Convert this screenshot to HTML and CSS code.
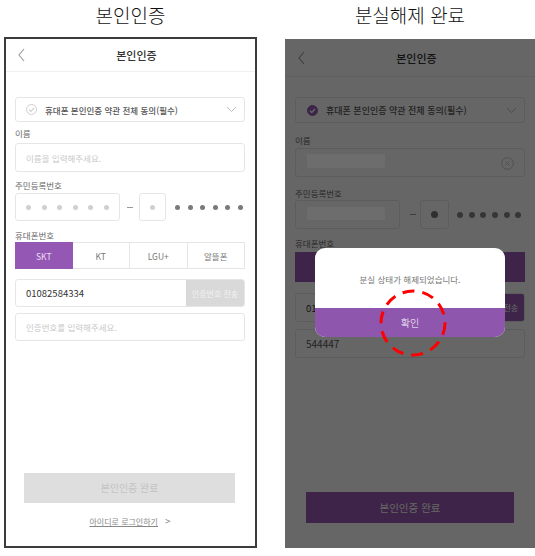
FILE: index.html
```html
<!DOCTYPE html>
<html lang="ko">
<head>
    <meta charset="UTF-8">
    <meta name="viewport" content="width=device-width, initial-scale=1.0">
    <title>본인인증 / 분실해제 완료</title>
    <link rel="stylesheet" href="styles.css">
</head>
<body>
    <div class="sheet">
        <div class="shot left">
            <div class="caption">본인인증</div>
            <div class="phone framed">
                <div class="topbar">
                    <svg class="back" width="7" height="14" viewBox="0 0 7 14"><path d="M6 1 L1 7 L6 13"/></svg>
                    <span class="topbar-title">본인인증</span>
                    <span></span>
                </div>
                <div class="form">
                    <div class="agree">
                        <svg class="check" width="11" height="11" viewBox="0 0 11 11"><circle cx="5.5" cy="5.5" r="5"/><path d="M3 5.7 L4.8 7.4 L8 4"/></svg>
                        <span class="agree-text">휴대폰 본인인증 약관 전체 동의(필수)</span>
                        <svg class="chev" width="11" height="7" viewBox="0 0 11 7"><path d="M1 1 L5.5 5.5 L10 1"/></svg>
                    </div>
                    <div class="label label-name">이름</div>
                    <div class="field"><span class="ph">이름을 입력해주세요.</span></div>
                    <div class="label label-ssn">주민등록번호</div>
                    <div class="ssn">
                        <div class="field ssn-front">
                            <i class="dot"></i><i class="dot"></i><i class="dot"></i><i class="dot"></i><i class="dot"></i><i class="dot"></i>
                        </div>
                        <span class="dash"></span>
                        <div class="field ssn-back"><i class="dot"></i></div>
                        <div class="dots"><i></i><i></i><i></i><i></i><i></i><i></i></div>
                    </div>
                    <div class="label label-phone">휴대폰번호</div>
                    <div class="tabs">
                        <div class="tab on">SKT</div>
                        <div class="tab">KT</div>
                        <div class="tab">LGU+</div>
                        <div class="tab">알뜰폰</div>
                    </div>
                    <div class="field phone-no">
                        <span class="val">01082584334</span>
                        <span class="send">인증번호 전송</span>
                    </div>
                    <div class="field code"><span class="ph">인증번호를 입력해주세요.</span></div>
                    <div class="footer">
                        <div class="done">본인인증 완료</div>
                        <div class="login-link"><span class="u">아이디로 로그인하기</span><span class="gt">&gt;</span></div>
                    </div>
                </div>
            </div>
        </div>

        <div class="shot right">
            <div class="caption">분실해제 완료</div>
            <div class="phone dimmed">
                <div class="topbar">
                    <svg class="back" width="7" height="14" viewBox="0 0 7 14"><path d="M6 1 L1 7 L6 13"/></svg>
                    <span class="topbar-title">본인인증</span>
                    <span></span>
                </div>
                <div class="form">
                    <div class="agree">
                        <svg class="check on" width="11" height="11" viewBox="0 0 11 11"><circle cx="5.5" cy="5.5" r="5"/><path d="M3 5.7 L4.8 7.4 L8 4"/></svg>
                        <span class="agree-text">휴대폰 본인인증 약관 전체 동의(필수)</span>
                        <svg class="chev" width="11" height="7" viewBox="0 0 11 7"><path d="M1 1 L5.5 5.5 L10 1"/></svg>
                    </div>
                    <div class="label label-name">이름</div>
                    <div class="field name">
                        <span class="mask"></span>
                        <svg class="clear" width="13" height="13" viewBox="0 0 13 13"><circle cx="6.5" cy="6.5" r="5.8"/><path d="M4.5 4.5 L8.5 8.5 M8.5 4.5 L4.5 8.5"/></svg>
                    </div>
                    <div class="label label-ssn">주민등록번호</div>
                    <div class="ssn">
                        <div class="field ssn-front"><span class="mask"></span></div>
                        <span class="dash"></span>
                        <div class="field ssn-back"><i class="dot filled"></i></div>
                        <div class="dots"><i></i><i></i><i></i><i></i><i></i><i></i></div>
                    </div>
                    <div class="label label-phone">휴대폰번호</div>
                    <div class="carrier-bar"></div>
                    <div class="field phone-no">
                        <span class="val">01082584334</span>
                        <span class="send">인증번호 전송</span>
                    </div>
                    <div class="field code"><span class="val">544447</span></div>
                    <div class="footer">
                        <div class="done">본인인증 완료</div>
                    </div>
                </div>

                <div class="dim-layer"></div>

                <div class="dialog">
                    <div class="dialog-msg">분실 상태가 해제되었습니다.</div>
                    <div class="dialog-ok">확인</div>
                </div>
                <svg class="mark" width="68" height="68" viewBox="0 0 68 68"><circle cx="34" cy="34" r="32"/></svg>
            </div>
        </div>
    </div>
</body>
</html>
```

FILE: styles.css
```css
html, body {
    margin: 0;
    padding: 0;
    background: #fff;
    font-family: "Noto Sans CJK KR", "Noto Sans", sans-serif;
}
.sheet {
    display: flex;
    width: 535px;
    height: 556px;
    overflow: hidden;
}
.shot {
    display: flex;
    flex-direction: column;
}
.shot.left {
    width: 253px;
    margin-left: 4px;
}
.shot.right {
    width: 250px;
    margin-left: 28px;
}
.caption {
    height: 37px;
    line-height: 30px;
    font-size: 19px;
    font-weight: 300;
    color: #111;
    text-align: center;
}
.right .caption {
    height: 39px;
}

/* phone screen */
.phone {
    position: relative;
    isolation: isolate;
    display: flex;
    flex-direction: column;
    background: #fff;
    box-sizing: border-box;
    overflow: hidden;
}
.phone.framed {
    height: 511px;
    border: 2px solid #3c3c3c;
}
.phone.dimmed {
    height: 509px;
}
.topbar {
    display: grid;
    grid-template-columns: 1fr auto 1fr;
    align-items: center;
    height: 32px;
    padding-left: 12px;
    border-bottom: 1px solid #f0f0f0;
}
.dimmed .topbar {
    height: 37px;
    padding-left: 13px;
}
.back path {
    fill: none;
    stroke: #9a9a9a;
    stroke-width: 1.1;
}
.topbar-title {
    font-size: 11px;
    font-weight: 500;
    color: #333;
}

.form {
    flex: 1;
    display: flex;
    flex-direction: column;
    padding: 25px 10px 0 9px;
}
.dimmed .form {
    padding: 20px 10px 0 10px;
}
.agree {
    display: flex;
    align-items: center;
    height: 25px;
    box-sizing: border-box;
    padding: 0 7px 0 10px;
    border: 1px solid #e6e6e6;
    border-radius: 3px;
}
.dimmed .agree {
    height: 26px;
    padding-left: 11px;
}
.check circle {
    fill: none;
    stroke: #cfcfcf;
}
.check path {
    fill: none;
    stroke: #cfcfcf;
    stroke-width: 1.1;
}
.check.on circle {
    fill: #995ab4;
    stroke: #995ab4;
}
.check.on path {
    stroke: #fff;
    stroke-width: 1.4;
}
.agree-text {
    flex: 1;
    margin-left: 8px;
    font-size: 8.5px;
    font-weight: 500;
    color: #555;
}
.dimmed .agree-text {
    font-size: 9px;
}
.chev path {
    fill: none;
    stroke: #bdbdbd;
}
.label {
    height: 14px;
    line-height: 14px;
    font-size: 8.5px;
    color: #666;
}
.label-name {
    margin-top: 4px;
}
.label-ssn {
    margin-top: 6px;
}
.label-phone {
    margin-top: 7px;
}
.field {
    position: relative;
    display: flex;
    align-items: center;
    height: 29px;
    margin-top: 3px;
    padding-left: 10px;
    box-sizing: border-box;
    border: 1px solid #e6e6e6;
    border-radius: 3px;
    overflow: hidden;
}
.ph {
    font-size: 8.5px;
    color: #c9c9c9;
}
.val {
    font-size: 9.5px;
    color: #333;
}

/* resident number */
.ssn {
    display: flex;
    align-items: center;
    height: 28px;
    margin-top: 1px;
}
.ssn .field {
    height: 100%;
    margin-top: 0;
}
.ssn-front {
    width: 105px;
    gap: 10.5px;
}
.dot {
    width: 5px;
    height: 5px;
    border-radius: 50%;
    background: #d0d0d0;
}
.dot.filled {
    width: 7px;
    height: 7px;
    background: #777;
}
.dash {
    width: 6px;
    height: 1px;
    margin: 0 6px 0 7px;
    background: #999;
}
.ssn-back {
    width: 27px;
    padding-left: 0;
    justify-content: center;
}
.dots {
    display: flex;
    gap: 7.5px;
    margin-left: 9px;
}
.dots i {
    width: 5px;
    height: 5px;
    border-radius: 50%;
    background: #7a7a7a;
}

/* carrier */
.tabs {
    display: grid;
    grid-template-columns: repeat(4, 1fr);
    height: 27px;
}
.tab {
    display: flex;
    align-items: center;
    justify-content: center;
    font-size: 8.5px;
    color: #777;
    border: 1px solid #e6e6e6;
    border-left: none;
}
.tab:first-child {
    border-left: 1px solid #e6e6e6;
}
.tab.on {
    background: #9457b3;
    border-color: #9457b3;
    color: #ecdff3;
}
.phone-no {
    margin-top: 10px;
    height: 28px;
}
.phone-no .val {
    flex: 1;
}
.send {
    align-self: stretch;
    display: flex;
    align-items: center;
    justify-content: center;
    width: 58px;
    font-size: 8px;
    color: #f3f3f3;
    background: #d9d9d9;
}
.code {
    margin-top: 6px;
    height: 28px;
}

.footer {
    margin-top: auto;
    padding-bottom: 18px;
}
.done {
    height: 30px;
    margin: 0 10px 0 9px;
    line-height: 30px;
    text-align: center;
    font-size: 10px;
    color: #c3c3c3;
    background: #dedede;
}
.login-link {
    height: 14px;
    margin-top: 11px;
    line-height: 14px;
    text-align: center;
    font-size: 8px;
    color: #888;
}
.login-link .u {
    text-decoration: underline;
}
.login-link .gt {
    margin-left: 7px;
    font-size: 10px;
}

/* dimmed screen specifics */
.dimmed .label-name {
    margin-top: 10px;
}
.dimmed .label-ssn {
    margin-top: 9px;
}
.dimmed .label-phone {
    margin-top: 7px;
}
.dimmed .field {
    margin-top: 1px;
}
.dimmed .ssn {
    height: 29px;
    margin-top: 0;
}
.dimmed .ssn .field {
    margin-top: 0;
}
.dimmed .ssn-back {
    width: 29px;
}
.dimmed .dash {
    margin: 0 4px 0 10px;
}
.dimmed .dots {
    gap: 5.7px;
    margin-left: 8px;
}
.dimmed .dots i {
    width: 6px;
    height: 6px;
    background: #888;
}
.carrier-bar {
    height: 30px;
    margin-top: 2px;
    background: #995ab4;
}
.dimmed .phone-no {
    height: 29px;
    margin-top: 11px;
}
.dimmed .phone-no .send {
    background: #995ab4;
    color: #fff;
}
.dimmed .code {
    height: 29px;
    margin-top: 7px;
}
.dimmed .code .val {
    font-size: 10px;
    color: #555;
}
.dimmed .footer {
    padding-bottom: 25px;
}
.dimmed .done {
    height: 31px;
    margin: 0 11px;
    line-height: 31px;
    font-size: 10.5px;
    color: #fff;
    background: #995ab4;
}
.mask {
    position: absolute;
    z-index: 3;
    left: 11px;
    top: 5px;
    width: 78px;
    height: 14px;
    background: #6d6d6d;
}
.ssn-front .mask {
    top: 6px;
    height: 13px;
}
.clear {
    position: absolute;
    right: 10px;
    top: 8px;
}
.clear circle,
.clear path {
    fill: none;
    stroke: #c8c8c8;
}

/* modal */
.dim-layer {
    position: absolute;
    inset: 0;
    z-index: 2;
    background: rgba(0, 0, 0, 0.6);
}
.dialog {
    position: absolute;
    z-index: 4;
    left: 30px;
    top: 209px;
    width: 190px;
    height: 89px;
    display: flex;
    flex-direction: column;
    border-radius: 10px;
    overflow: hidden;
    background: #fff;
}
.dialog-msg {
    height: 60px;
    line-height: 62px;
    text-align: center;
    font-size: 8.5px;
    color: #777;
}
.dialog-ok {
    flex: 1;
    display: flex;
    align-items: center;
    justify-content: center;
    font-size: 10px;
    font-weight: 300;
    color: #fff;
    background: #8e56ad;
}
.mark {
    position: absolute;
    z-index: 5;
    left: 94px;
    top: 250px;
}
.mark circle {
    fill: none;
    stroke: #f00;
    stroke-width: 3;
    stroke-dasharray: 12 8;
}
```
